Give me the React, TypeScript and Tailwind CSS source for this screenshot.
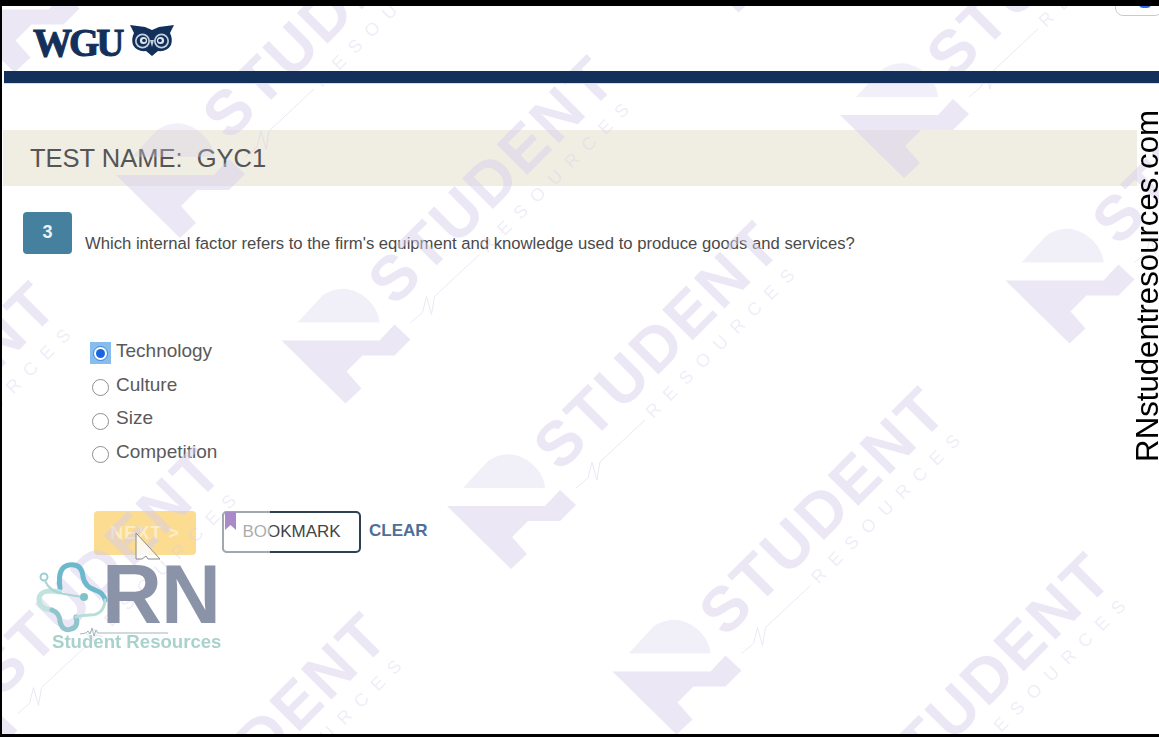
import React from 'react';

const SANS = "font-['Liberation_Sans',Arial,sans-serif]";

// grid of the diagonal watermark, one anchor per tile (bottom-left of the R mark)
const WATERMARKS: [number, number][] = [];
for (let m = -1; m <= 1; m++) {
  for (let n = -4; n <= 4; n++) {
    WATERMARKS.push([447 + 393 * m + 165.5 * n, 506 - 391 * m + 165.5 * n]);
  }
}

const OPTIONS = ['Technology', 'Culture', 'Size', 'Competition'];

const Watermark: React.FC<{ x: number; y: number }> = ({ x, y }) => (
  <g transform={`translate(${x} ${y})`} fill="#d6cfeb">
    <path d="M16 -18 L41 -45 Q60 -58 80 -46 Q97 -34 98 -18 Z" opacity={0.65} />
    <path d="M0 0 H98 L113 -16 L129 -1 L113 15 H81 L65 31 L80 48 L64 63 Z" />
    <text
      transform="translate(113 -33) rotate(-45)"
      fontFamily="'Liberation Sans', Arial, sans-serif"
      fontWeight={700}
      fontSize={63}
      letterSpacing={3}
    >
      STUDENT
    </text>
    <text
      transform="translate(206 -87) rotate(-45)"
      fontFamily="'Liberation Sans', Arial, sans-serif"
      fontSize={18}
      letterSpacing={11}
      opacity={0.75}
    >
      RESOURCES
    </text>
    <polyline
      points="129,-18 141,-28 145,-44 150,-26 153,-44 198,-86"
      fill="none"
      stroke="#d6cfeb"
      strokeWidth={1}
    />
  </g>
);

const Owl = () => (
  <svg viewBox="0 0 44 33" className="w-[44px] h-[33px] ml-[8px] mt-[1px]">
    <path
      d="M0 2 L15 4 L22 7 L29 4 L44 2 L40 10 Q43 16 41 22 Q37 29 28 28 L22 33 L16 28 Q7 29 3 22 Q1 16 4 10 Z"
      fill="#12305a"
    />
    <circle cx="12.5" cy="18" r="7.5" fill="#c4d1de" />
    <circle cx="31.5" cy="18" r="7.5" fill="#c4d1de" />
    <circle cx="12.5" cy="18" r="5.8" fill="#12305a" />
    <circle cx="31.5" cy="18" r="5.8" fill="#12305a" />
    <circle cx="13.5" cy="17.5" r="3.6" fill="#dfe7ef" />
    <circle cx="30.5" cy="17.5" r="3.6" fill="#dfe7ef" />
    <circle cx="14" cy="17.5" r="1.8" fill="#12305a" />
    <circle cx="30" cy="17.5" r="1.8" fill="#12305a" />
    <path d="M20 17 H24 L22 24 Z" fill="#c4d1de" />
  </svg>
);

const RadioMark: React.FC<{ checked: boolean }> = ({ checked }) =>
  checked ? (
    <span className="w-[21px] h-[22px] flex items-center justify-center bg-[#86bdee]">
      <span className="w-[15px] h-[15px] rounded-full bg-white border border-[#3d7fd8] flex items-center justify-center">
        <span className="w-[9px] h-[9px] rounded-full bg-[#1668e0]" />
      </span>
    </span>
  ) : (
    <span className="w-[21px] h-[22px] flex items-center justify-center">
      <span className="w-[17px] h-[17px] rounded-full bg-white border-[1.5px] border-[#8f8f8f]" />
    </span>
  );

const RnLogo = () => (
  <div className="absolute left-[30px] top-[549px] w-[200px] h-[105px] z-30">
    <svg viewBox="0 0 80 84" className="absolute left-0 top-0 w-[80px] h-[84px]" fill="none" strokeLinecap="round">
      <path d="M28 33 Q25 12 37 10 Q50 8 51 22 Q53 32 63 35 Q72 38 73 45" stroke="#6db8cc" strokeWidth={5} />
      <path d="M28 37 Q8 33 7 44 Q7 54 20 55" stroke="#bfe3de" strokeWidth={5} />
      <path d="M20 55 Q28 58 28 67 Q31 77 39 74 Q47 72 44 62" stroke="#8fc5cb" strokeWidth={5} />
      <path d="M73 45 Q72 60 58 60 Q50 60 44 62" stroke="#b9ded8" strokeWidth={3} />
      <circle cx="12" cy="22" r="3.5" stroke="#9ecfd0" strokeWidth={2} />
      <path d="M13 26 Q18 37 32 39 L50 42" stroke="#a9d6d4" strokeWidth={2} />
      <circle cx="52" cy="42" r="4" fill="#7fc3c6" />
    </svg>
    <div className={`${SANS} absolute left-[70px] top-[-6px] text-[83px] leading-[92px] font-bold tracking-[-1px] text-[#8a93a8]`}>
      RN
    </div>
    <svg viewBox="0 0 90 12" className="absolute left-[48px] top-[71px] w-[90px] h-[12px]" fill="none">
      <path d="M0 8 L6 7 L8 5 L10 8 L12 2 L14 10 L16 4 L18 7 H88" stroke="#8ba3a8" strokeWidth={0.8} />
    </svg>
    <div className={`${SANS} absolute left-[20px] top-[76px] text-[18.6px] leading-[22px] font-bold text-[#a9d2cd] whitespace-nowrap`}>
      Student Resources
    </div>
  </div>
);

export default function App() {
  return (
    <div className={`${SANS} relative w-[1159px] h-[737px] overflow-hidden bg-white border-t-[6px] border-b-[3px] border-l-[2px] border-black flex flex-col`}>
      {/* header */}
      <div className="h-[65px] pl-[31px] pt-[16px] flex items-start">
        <span className="font-['Liberation_Serif',serif] font-bold text-[39px] leading-[42px] tracking-[-3px] [-webkit-text-stroke:1px_#12305a] text-[#12305a]">WGU</span>
        <Owl />
      </div>
      <div className="relative z-20 h-[12px] ml-[2px] bg-[#12305a] shadow-[0_1px_0_#cfe0ea]" />

      {/* test name band */}
      <div className="mt-[47px] h-[56px] ml-[1px] mr-[22px] bg-[#f0ede3] flex items-center pl-[27px]">
        <h1 className="text-[25.5px] text-[#555] whitespace-pre">TEST NAME:  GYC1</h1>
      </div>

      {/* question */}
      <div className="mt-[26px] pl-[21px] flex items-start">
        <div className="w-[49px] h-[42px] rounded-[4px] bg-[#45819f] flex justify-center pt-[8px] text-[18px] leading-[24px] font-bold text-[#eef3f5]">
          3
        </div>
        <p className="ml-[13px] mt-[21px] text-[16.66px] leading-[22px] text-[#4a4a4a] whitespace-nowrap">
          Which internal factor refers to the firm's equipment and knowledge used to produce goods and services?
        </p>
      </div>

      {/* options */}
      <div className="mt-[83px] pl-[88px] flex flex-col">
        {OPTIONS.map((option, i) => (
          <label key={option} className="h-[33.5px] flex items-start gap-[5px]">
            <span className={i === 0 ? 'mt-[4px]' : 'mt-[5px]'}>
              <RadioMark checked={i === 0} />
            </span>
            <span className="text-[19px] leading-[26px] text-[#5a5a5a]">{option}</span>
          </label>
        ))}
      </div>

      {/* actions */}
      <div className="mt-[39px] pl-[92px] flex items-start">
        <button className="w-[102px] h-[44px] rounded-[4px] bg-[#fbdc90] text-[18px] font-bold tracking-[1px] text-white/50">NEXT &gt;</button>
        <button className="relative ml-[26px] w-[139px] h-[42px] rounded-[5px] border-2 border-[#2f4050] bg-white text-[17px] text-[#444] flex items-center justify-center">
          BOOKMARK
          <span className="absolute left-[-2px] top-[-2px] bottom-[-2px] w-[48px] rounded-l-[5px] bg-white/55" />
          <svg viewBox="0 0 11 18" className="absolute left-[1px] top-[-1px] w-[11px] h-[18px]">
            <path d="M0 0 H11 V18 L5.5 13 L0 18 Z" fill="#a98bc9" />
          </svg>
        </button>
        <button className="ml-[8px] mt-[8px] text-[17px] leading-[24px] font-bold text-[#4d6f98]">CLEAR</button>
      </div>

      {/* video watermark laid over the page */}
      <svg viewBox="2 6 1157 728" className="absolute inset-0 w-full h-full z-10 pointer-events-none" opacity={0.5}>
        {WATERMARKS.map(([x, y]) => (
          <Watermark key={`${x}-${y}`} x={x} y={y} />
        ))}
      </svg>

      {/* mouse cursor */}
      <svg viewBox="0 0 27 29" className="absolute left-[132px] top-[526px] w-[27px] h-[29px] z-40">
        <path d="M2 1 V27 H8 L12 24 L14 27 H26 Z" fill="#ffffff" fillOpacity={0.8} stroke="#8a8a8a" strokeWidth={1} />
      </svg>

      <RnLogo />

      {/* site name along the right edge */}
      <div className="absolute right-[-5px] top-[104px] z-30 [writing-mode:vertical-rl] rotate-180 text-[31.2px] leading-[32px] text-black whitespace-nowrap">
        RNstudentresources.com
      </div>

      {/* corner of the browser control cut off at the top right */}
      <div className="absolute right-[-4px] top-[-8px] w-[48px] h-[18px] rounded-b-[8px] bg-white border border-[#c8ccd2] z-30">
        <span className="absolute left-[23px] top-[5px] w-[12px] h-[4px] rounded-b-full bg-[#2f6fe0]" />
      </div>
    </div>
  );
}
